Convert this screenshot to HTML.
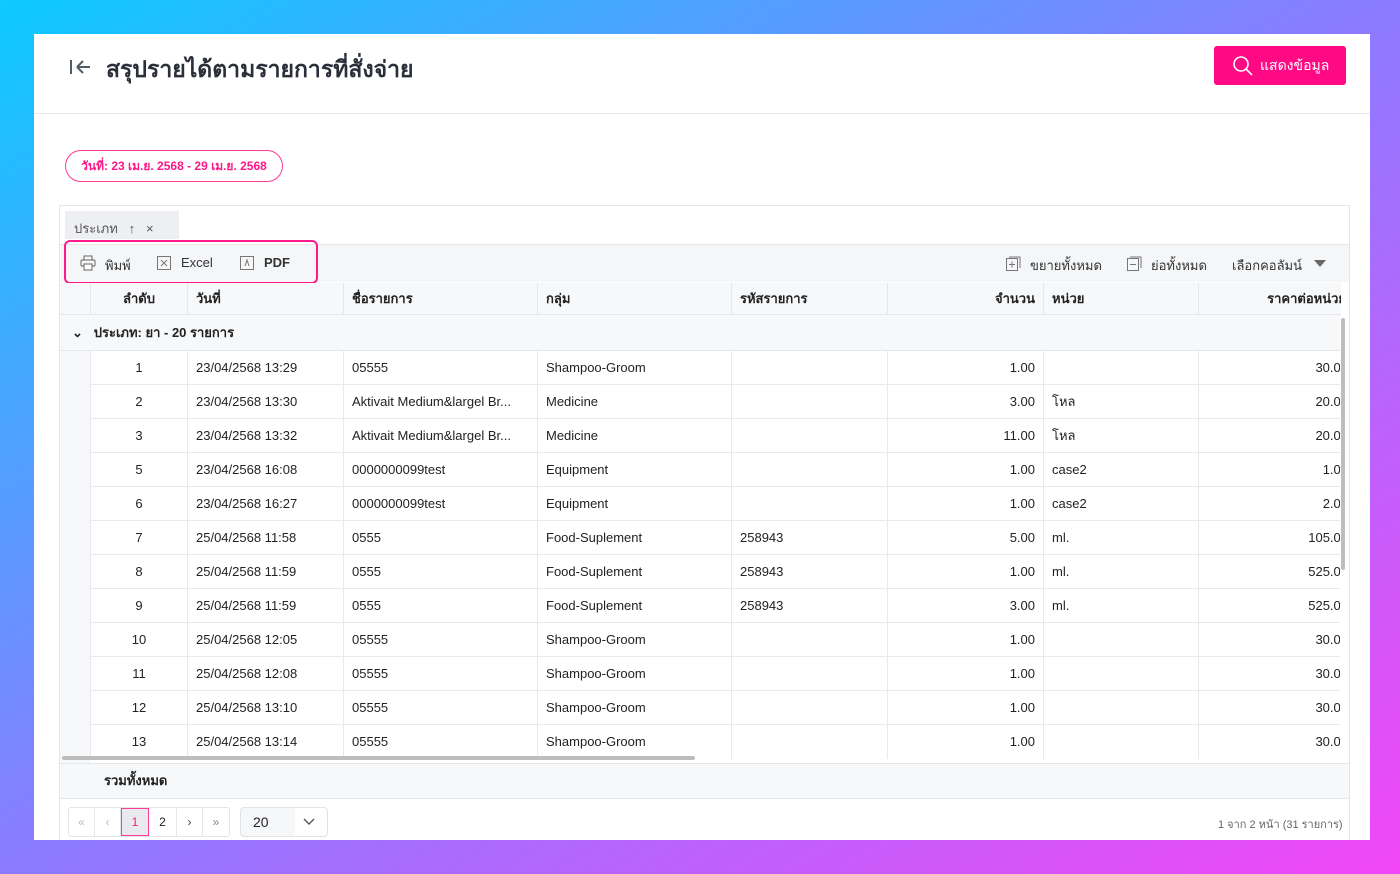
<!DOCTYPE html>
<html><head><meta charset="utf-8"><style>
*{box-sizing:border-box;margin:0;padding:0}
body{width:1400px;height:874px;overflow:hidden;font-family:"Liberation Sans",sans-serif;color:#222;background:linear-gradient(to bottom right,#0ccaff 0%,#8c7bff 50%,#f246f6 100%);position:relative}
.card{position:absolute;left:34px;top:34px;width:1336px;height:806px;background:#fff;overflow:hidden}
.abs{position:absolute}
.title{left:72px;top:18px;font-size:23px;font-weight:bold;color:#2b2f3a}
.btn{left:1180px;top:12px;width:132px;height:39px;background:#ff0a84;border-radius:3px;color:#fff;font-size:14px;display:flex;align-items:center;padding-left:18px;gap:6px}
.hdrline{left:0;top:79px;width:1336px;height:1px;background:#e6e6ea}
.date{left:31px;top:116px;width:218px;height:32px;border:1.5px solid #ff3a97;border-radius:16px;color:#ff1686;font-size:12px;font-weight:bold;display:flex;align-items:center;justify-content:center}
.grid{left:25px;top:171px;width:1291px;height:640px;border:1px solid #e4e6ea;overflow:hidden}
.tag{left:5px;top:5px;width:114px;height:28px;background:#eeeff2;font-size:13px;color:#555;padding:7px 0 0 9px}
.toolbar{left:0;top:38px;width:1291px;height:38px;background:#f5f6f8;border-top:1px solid #e6e7ea}
.hl{left:4px;top:34px;width:254px;height:44px;border:2.5px solid #ff1a8c;border-radius:6px}
.tb{font-size:13px;color:#333;top:49px}
.row{position:absolute;left:30px;width:1252px;height:34px;border-bottom:1px solid #e8e9ec;background:#fff;font-size:13px;color:#222}
.row div{position:absolute;top:0;height:34px;line-height:34px;border-left:1px solid #e8e9ec;white-space:nowrap;overflow:hidden}
.c1{left:0;width:97px;text-align:center}
.c2{left:97px;width:156px;padding-left:8px}
.c3{left:253px;width:194px;padding-left:8px}
.c4{left:447px;width:194px;padding-left:8px}
.c5{left:641px;width:156px;padding-left:8px}
.c6{left:797px;width:156px;text-align:right;padding-right:8px}
.c7{left:953px;width:155px;padding-left:8px}
.c8{left:1108px;width:142px;text-align:right;padding-right:0}
.c8 span{position:relative;left:8px}
.head{position:absolute;left:0;top:77px;width:1281px;height:32px;background:#f7f8fa;border-bottom:1px solid #e6e7ea;font-size:13px;font-weight:bold;overflow:hidden}
.head div{position:absolute;top:0;height:32px;line-height:32px;border-left:1px solid #e6e7ea;white-space:nowrap;overflow:hidden}
</style></head><body>
<div class="card">
  <svg class="abs" style="left:35px;top:23px" width="24" height="20" viewBox="0 0 24 20"><path d="M2 3v14M8 10h13M8 10l6-6M8 10l6 6" stroke="#555b66" stroke-width="2" fill="none"/></svg>
  <div class="abs title">สรุปรายได้ตามรายการที่สั่งจ่าย</div>
  <div class="abs btn"><svg width="22" height="22" viewBox="0 0 22 22"><circle cx="9" cy="9" r="7" stroke="#fff" stroke-width="1.6" fill="none"/><path d="M14 14l6 6" stroke="#fff" stroke-width="1.6"/></svg>แสดงข้อมูล</div>
  <div class="abs hdrline"></div>
  <div class="abs date">วันที่: 23 เม.ย. 2568 - 29 เม.ย. 2568</div>
  <div class="abs grid">
    <div class="abs tag">ประเภท &nbsp;&nbsp;↑ &nbsp;&nbsp;×</div>
    <div class="abs toolbar"></div>
    <svg class="abs" style="left:20px;top:49px" width="16" height="16" viewBox="0 0 16 16"><rect x="4" y="1" width="8" height="4" fill="none" stroke="#666"/><rect x="1" y="5" width="14" height="6" rx="1" fill="none" stroke="#666"/><rect x="4" y="9" width="8" height="6" fill="#fff" stroke="#666"/></svg>
    <div class="abs tb" style="left:45px">พิมพ์</div>
    <svg class="abs" style="left:97px;top:50px" width="14" height="14"><rect x=".5" y=".5" width="13" height="13" fill="none" stroke="#777"/><path d="M4 4l6 6M10 4l-6 6" stroke="#777"/></svg>
    <div class="abs tb" style="left:121px">Excel</div>
    <svg class="abs" style="left:180px;top:50px" width="14" height="14"><rect x=".5" y=".5" width="13" height="13" fill="none" stroke="#777"/><path d="M5 10l2-6 2 6" stroke="#777" fill="none"/></svg>
    <div class="abs tb" style="left:204px;font-weight:bold">PDF</div>
    <div class="abs hl"></div>
    <svg class="abs" style="left:946px;top:50px" width="15" height="15"><rect x=".5" y="2.5" width="11" height="12" fill="none" stroke="#777"/><path d="M3 1h11v11" fill="none" stroke="#777"/><path d="M3 8.5h6M6 5.5v6" stroke="#777"/></svg>
    <div class="abs tb" style="left:970px">ขยายทั้งหมด</div>
    <svg class="abs" style="left:1067px;top:50px" width="15" height="15"><rect x=".5" y="2.5" width="11" height="12" fill="none" stroke="#777"/><path d="M3 1h11v11" fill="none" stroke="#777"/><path d="M3 8.5h6" stroke="#777"/></svg>
    <div class="abs tb" style="left:1091px">ย่อทั้งหมด</div>
    <div class="abs tb" style="left:1172px">เลือกคอลัมน์</div>
    <svg class="abs" style="left:1254px;top:54px" width="12" height="8"><path d="M0 0h12L6 7z" fill="#666"/></svg>
    <div class="head">
      <div style="left:30px;width:97px;text-align:center">ลำดับ</div>
      <div style="left:127px;width:156px;padding-left:8px">วันที่</div>
      <div style="left:283px;width:194px;padding-left:8px">ชื่อรายการ</div>
      <div style="left:477px;width:194px;padding-left:8px">กลุ่ม</div>
      <div style="left:671px;width:156px;padding-left:8px">รหัสรายการ</div>
      <div style="left:827px;width:156px;text-align:right;padding-right:8px">จำนวน</div>
      <div style="left:983px;width:155px;padding-left:8px">หน่วย</div>
      <div style="left:1138px;width:160px;text-align:right;padding-right:12px">ราคาต่อหน่วย</div>
    </div>
    <div class="abs" style="left:0;top:109px;width:1282px;height:36px;background:#f7f8fa;border-bottom:1px solid #e6e7ea;font-size:13px;font-weight:bold;line-height:36px;padding-left:12px">⌄ &nbsp;&nbsp;ประเภท: ยา - 20 รายการ</div>
    <div class="abs" style="left:0;top:145px;width:30px;height:412px;background:#f7f8fa"></div>

    <div class="row" style="top:145px"><div class="c1">1</div><div class="c2">23/04/2568 13:29</div><div class="c3">05555</div><div class="c4">Shampoo-Groom</div><div class="c5"></div><div class="c6">1.00</div><div class="c7"></div><div class="c8"><span>30.00</span></div></div>
    <div class="row" style="top:179px"><div class="c1">2</div><div class="c2">23/04/2568 13:30</div><div class="c3">Aktivait Medium&amp;largel Br...</div><div class="c4">Medicine</div><div class="c5"></div><div class="c6">3.00</div><div class="c7">โหล</div><div class="c8"><span>20.00</span></div></div>
    <div class="row" style="top:213px"><div class="c1">3</div><div class="c2">23/04/2568 13:32</div><div class="c3">Aktivait Medium&amp;largel Br...</div><div class="c4">Medicine</div><div class="c5"></div><div class="c6">11.00</div><div class="c7">โหล</div><div class="c8"><span>20.00</span></div></div>
    <div class="row" style="top:247px"><div class="c1">5</div><div class="c2">23/04/2568 16:08</div><div class="c3">0000000099test</div><div class="c4">Equipment</div><div class="c5"></div><div class="c6">1.00</div><div class="c7">case2</div><div class="c8"><span>1.00</span></div></div>
    <div class="row" style="top:281px"><div class="c1">6</div><div class="c2">23/04/2568 16:27</div><div class="c3">0000000099test</div><div class="c4">Equipment</div><div class="c5"></div><div class="c6">1.00</div><div class="c7">case2</div><div class="c8"><span>2.00</span></div></div>
    <div class="row" style="top:315px"><div class="c1">7</div><div class="c2">25/04/2568 11:58</div><div class="c3">0555</div><div class="c4">Food-Suplement</div><div class="c5">258943</div><div class="c6">5.00</div><div class="c7">ml.</div><div class="c8"><span>105.00</span></div></div>
    <div class="row" style="top:349px"><div class="c1">8</div><div class="c2">25/04/2568 11:59</div><div class="c3">0555</div><div class="c4">Food-Suplement</div><div class="c5">258943</div><div class="c6">1.00</div><div class="c7">ml.</div><div class="c8"><span>525.00</span></div></div>
    <div class="row" style="top:383px"><div class="c1">9</div><div class="c2">25/04/2568 11:59</div><div class="c3">0555</div><div class="c4">Food-Suplement</div><div class="c5">258943</div><div class="c6">3.00</div><div class="c7">ml.</div><div class="c8"><span>525.00</span></div></div>
    <div class="row" style="top:417px"><div class="c1">10</div><div class="c2">25/04/2568 12:05</div><div class="c3">05555</div><div class="c4">Shampoo-Groom</div><div class="c5"></div><div class="c6">1.00</div><div class="c7"></div><div class="c8"><span>30.00</span></div></div>
    <div class="row" style="top:451px"><div class="c1">11</div><div class="c2">25/04/2568 12:08</div><div class="c3">05555</div><div class="c4">Shampoo-Groom</div><div class="c5"></div><div class="c6">1.00</div><div class="c7"></div><div class="c8"><span>30.00</span></div></div>
    <div class="row" style="top:485px"><div class="c1">12</div><div class="c2">25/04/2568 13:10</div><div class="c3">05555</div><div class="c4">Shampoo-Groom</div><div class="c5"></div><div class="c6">1.00</div><div class="c7"></div><div class="c8"><span>30.00</span></div></div>
    <div class="row" style="top:519px;height:38px;border-bottom:none"><div class="c1">13</div><div class="c2">25/04/2568 13:14</div><div class="c3">05555</div><div class="c4">Shampoo-Groom</div><div class="c5"></div><div class="c6">1.00</div><div class="c7"></div><div class="c8"><span>30.00</span></div></div>
    <div class="abs" style="left:1280px;top:109px;width:11px;height:448px;background:#fff"></div>
    <div class="abs" style="left:1281px;top:112px;width:4px;height:252px;background:#bdbdbd;border-radius:2px"></div>
    <div class="abs" style="left:2px;top:550px;width:633px;height:4px;background:#bdbdbd;border-radius:2px"></div>
    <div class="abs" style="left:0;top:557px;width:1291px;height:36px;background:#f7f8fa;border-top:1px solid #e6e7ea;border-bottom:1px solid #e6e7ea;font-size:13px;font-weight:bold;line-height:34px;padding-left:44px">รวมทั้งหมด</div>
    <div class="abs" style="left:8px;top:601px;width:162px;height:30px;border:1px solid #e4e6ea;border-radius:3px;display:flex;font-size:12px;color:#bbb">
      <div style="width:26px;text-align:center;line-height:28px;border-right:1px solid #e4e6ea">«</div>
      <div style="width:26px;text-align:center;line-height:28px;border-right:1px solid #e4e6ea">‹</div>
      <div style="width:28px;text-align:center;line-height:26px;border:1.5px solid #ff3a97;background:#e9eaee;color:#ff1686">1</div>
      <div style="width:28px;text-align:center;line-height:28px;border-right:1px solid #e4e6ea;color:#222">2</div>
      <div style="width:26px;text-align:center;line-height:28px;border-right:1px solid #e4e6ea;color:#444">›</div>
      <div style="width:26px;text-align:center;line-height:28px;color:#888">»</div>
    </div>
    <div class="abs" style="left:180px;top:601px;width:88px;height:30px;border:1px solid #e0e2e6;border-radius:4px;font-size:14px;line-height:28px;padding-left:12px;background:linear-gradient(90deg,#f6f7f9 0 54px,#fff 54px)">20<svg style="position:absolute;left:62px;top:10px" width="12" height="8"><path d="M1 1l5 5 5-5" stroke="#555" stroke-width="1.4" fill="none"/></svg></div>
    <div class="abs" style="left:1158px;top:609px;font-size:11px;color:#666">1 จาก 2 หน้า (31 รายการ)</div>
  </div>
</div>
</body></html>
